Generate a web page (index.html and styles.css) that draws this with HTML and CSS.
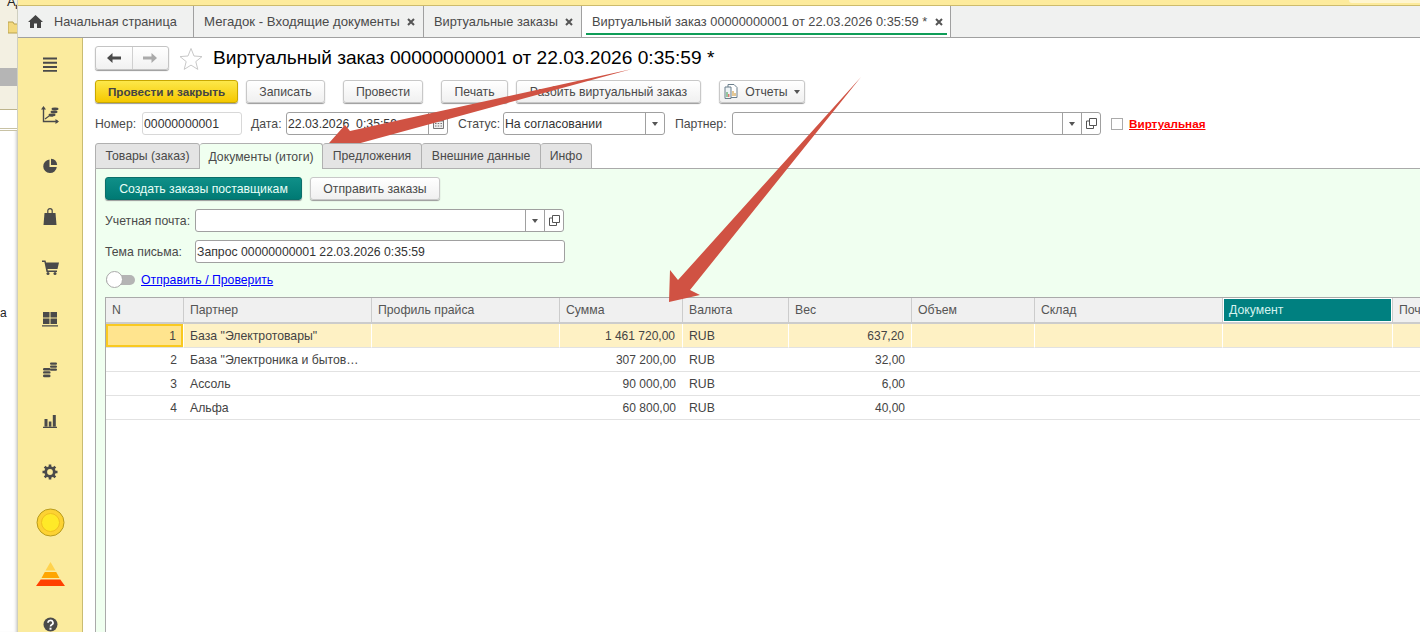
FILE: index.html
```html
<!DOCTYPE html>
<html lang="ru">
<head>
<meta charset="utf-8">
<title>Виртуальный заказ</title>
<link rel="stylesheet" href="styles.css">
</head>
<body>
<div class="app">
  <aside class="behind">
    <div class="behind-top"><span class="behind-text">Ад</span>
      <svg class="behind-folder" width="10" height="14" viewBox="0 0 10 14"><path d="M0 2h5l1 2h4v9H0z" fill="#f3d97e" stroke="#b9a24e"/></svg>
    </div>
    <div class="behind-gray"></div>
    <div class="behind-cream"></div>
    <div class="behind-white"></div>
    <div class="behind-lower"><span class="behind-letter">а</span></div>
  </aside>
  <div class="window">
    <div class="topbar"><span class="topbar-patch"></span></div>
    <nav class="opentabs">
      <div class="otab otab-home">
        <svg class="home-icon" width="15" height="13" viewBox="0 0 15 13"><path d="M7.5 0 15 7h-2v6H9V8.5H6V13H2V7H0z" fill="#444"/></svg>
        <span>Начальная страница</span>
      </div>
      <div class="otab otab-mega"><span>Мегадок - Входящие документы</span><svg class="x" width="8" height="8" viewBox="0 0 8 8"><path d="M1 1l6 6M7 1 1 7" stroke="#555" stroke-width="2"/></svg></div>
      <div class="otab otab-list"><span>Виртуальные заказы</span><svg class="x" width="8" height="8" viewBox="0 0 8 8"><path d="M1 1l6 6M7 1 1 7" stroke="#555" stroke-width="2"/></svg></div>
      <div class="otab otab-active"><span>Виртуальный заказ 00000000001 от 22.03.2026 0:35:59 *</span><svg class="x" width="8" height="8" viewBox="0 0 8 8"><path d="M1 1l6 6M7 1 1 7" stroke="#555" stroke-width="2"/></svg></div>
    </nav>
    <div class="workspace">
      <div class="sidebar">
        <div class="side-item"><svg width="16" height="16" viewBox="0 0 16 16"><path d="M1 1.5h14v2H1zM1 5.8h14v2H1zM1 10.1h14v2H1zM1 14h14v1.800H1z" fill="#4a4a4a"/></svg></div>
        <div class="side-item"><svg width="18" height="18" viewBox="0 0 18 18"><path d="M2.500 2v13.500H17" fill="none" stroke="#4a4a4a" stroke-width="1.400"/><path d="M2.500 0 5 3.500H0zM18 15.500 14.500 18v-5z" fill="#4a4a4a"/><path d="M4 13l4-3h4" fill="none" stroke="#4a4a4a" stroke-width="1.200"/><ellipse cx="14" cy="3" rx="3.500" ry="1.400" fill="#4a4a4a"/><ellipse cx="13" cy="6" rx="3.500" ry="1.400" fill="#4a4a4a"/><ellipse cx="11" cy="9" rx="3.500" ry="1.400" fill="#4a4a4a"/></svg></div>
        <div class="side-item"><svg width="16" height="16" viewBox="0 0 16 16"><path d="M7.500 1.500A6.800 6.800 0 1 0 14.800 9H7.500z" fill="#4a4a4a"/><path d="M9 .8A6.800 6.800 0 0 1 15.200 7H9z" fill="#4a4a4a"/></svg></div>
        <div class="side-item"><svg width="14" height="17" viewBox="0 0 14 17"><path d="M1.500 5h11L13.500 17H.5z" fill="#4a4a4a"/><path d="M4.800 7V2.800a2.200 2.200 0 0 1 4.400 0V7" fill="none" stroke="#4a4a4a" stroke-width="1.200"/></svg></div>
        <div class="side-item"><svg width="17" height="15" viewBox="0 0 17 15"><path d="M0 .5h3.500l.6 2H17l-1.500 6.500H5.500l.4 1.500H15v1.500H4.500L2.400 2H0z" fill="#4a4a4a"/><circle cx="6" cy="13.500" r="1.500" fill="#4a4a4a"/><circle cx="13" cy="13.500" r="1.500" fill="#4a4a4a"/></svg></div>
        <div class="side-item"><svg width="16" height="16" viewBox="0 0 16 16"><path d="M1 1h6.500v5.500H1zM8.500 1H15v5.500H8.500zM1 7.500h6.500V13H1zM8.500 7.500H15V13H8.500zM0 14.300h16v1.200H0z" fill="#4a4a4a"/></svg></div>
        <div class="side-item"><svg width="14" height="16" viewBox="0 0 14 16"><g fill="#4a4a4a"><rect x="7" y="0.500" width="7" height="2.300" rx="1.100"/><rect x="7" y="3.500" width="7" height="2.300" rx="1.100"/><rect x="7" y="6.500" width="7" height="2.300" rx="1.100"/><rect x="0" y="6" width="7.500" height="2.400" rx="1.200"/><rect x="0" y="9.200" width="7.500" height="2.400" rx="1.200"/><rect x="0" y="12.400" width="7.500" height="2.800" rx="1.300"/></g></svg></div>
        <div class="side-item"><svg width="14" height="14" viewBox="0 0 14 14"><path d="M1.500 5h3v7.500h-3zM5.800 7.500h2.600v5H5.800zM9.800 1h3v11.500h-3zM0 12.800h14V14H0z" fill="#4a4a4a"/></svg></div>
        <div class="side-item"><svg width="16" height="16" viewBox="0 0 16 16"><path d="M8 .5v15M.5 8h15M2.700 2.700l10.600 10.600M13.300 2.700 2.700 13.300" stroke="#4a4a4a" stroke-width="2.600"/><circle cx="8" cy="8" r="4.300" fill="none" stroke="#4a4a4a" stroke-width="2.800"/><circle cx="8" cy="8" r="2.900" fill="#fbeb9e"/></svg></div>
        <div class="side-item"><svg width="29" height="29" viewBox="0 0 29 29"><circle cx="14.500" cy="14.500" r="13.500" fill="#fdd233" stroke="#b89b1c"/><circle cx="14.500" cy="14.500" r="9" fill="#ffe928" stroke="#f0c020"/></svg></div>
        <div class="side-item"><svg width="29" height="24" viewBox="0 0 29 24"><path d="M14.500 0l5 8.500h-10z" fill="#ffd24d"/><path d="M8.800 10h11.400l3.300 6H5.500z" fill="#ffa500"/><path d="M4.700 17.500h19.600L29 24H0z" fill="#ff4000"/></svg></div>
        <div class="side-item"><svg width="15" height="15" viewBox="0 0 15 15"><circle cx="7.500" cy="7.500" r="7" fill="#4a4a4a"/><path d="M5 5.800a2.500 2.300 0 1 1 3.700 2c-.9.500-1.200 1-1.200 1.800" fill="none" stroke="#fff" stroke-width="1.700"/><path d="M6.500 10.700h2v2h-2z" fill="#fff"/></svg></div>
      </div>
      <main class="content">
        <div class="head">
          <div class="navline">
            <div class="navbtns">
              <span class="navbtn navbtn-left"><svg width="14" height="10" viewBox="0 0 14 10"><path d="M5.500 0v3.500H14v3H5.500V10L0 5z" fill="#4a4a4a"/></svg></span>
              <span class="navbtn"><svg width="14" height="10" viewBox="0 0 14 10"><path d="M8.500 0v3.500H0v3h8.500V10L14 5z" fill="#aaa"/></svg></span>
            </div>
            <svg class="star" width="24" height="23" viewBox="0 0 24 23"><path d="M12 1.500l3 7.500 8 .6-6.200 5 2 7.800-6.800-4.300-6.800 4.300 2-7.800L1 9.600 9 9z" fill="#fff" stroke="#c8c8c8"/></svg>
            <h1 class="title">Виртуальный заказ 00000000001 от 22.03.2026 0:35:59 *</h1>
          </div>
          <div class="toolbar">
            <button class="btn btn-primary">Провести и закрыть</button>
            <button class="btn btn-save">Записать</button>
            <button class="btn btn-post">Провести</button>
            <button class="btn btn-print">Печать</button>
            <button class="btn btn-split">Разбить виртуальный заказ</button>
            <button class="btn btn-reports">
              <svg width="15" height="15" viewBox="0 0 15 15"><path d="M4 .5h6l3 3v10H4z" fill="#fff" stroke="#6b7f8c"/><path d="M1 3h6v11.500H1z" fill="#eef3f5" stroke="#6b7f8c"/><path d="M2.500 8h1v5h-1z" fill="#3a9a4a"/><path d="M4.300 10h1v3h-1z" fill="#d9483a"/><path d="M8.500 7h1v5h-1zM10.500 9h1v3h-1z" fill="#c9902a"/></svg>
              <span>Отчеты</span><i class="caret"></i>
            </button>
          </div>
          <div class="fields">
            <label class="lbl lbl-num">Номер:</label>
            <div class="input input-num">00000000001</div>
            <label class="lbl lbl-date">Дата:</label>
            <div class="input input-date"><span class="val">22.03.2026  0:35:59</span>
              <span class="addon"><svg width="11" height="11" viewBox="0 0 11 11"><path d="M.5 1.500h10v9H.5z" fill="#eee" stroke="#777"/><path d="M.5 1h10v2.500H.5z" fill="#777"/><path d="M2 5h1.500v1H2zM4.700 5h1.500v1H4.700zM7.500 5H9v1H7.500zM2 7.500h1.500v1H2zM4.700 7.500h1.500v1H4.700zM7.500 7.500H9v1H7.500z" fill="#777"/></svg></span></div>
            <label class="lbl lbl-status">Статус:</label>
            <div class="input input-status"><span class="val">На согласовании</span><span class="addon"><i class="caret"></i></span></div>
            <label class="lbl lbl-partner">Партнер:</label>
            <div class="input input-partner"><span class="val"></span><span class="addon"><i class="caret"></i></span><span class="addon"><svg width="11" height="11" viewBox="0 0 11 11"><path d="M3.500.5h7v7h-7z" fill="none" stroke="#555"/><path d="M3.500 3H.5v7.500h7v-3" fill="none" stroke="#555"/></svg></span></div>
            <span class="check"></span>
            <a class="virtual-link">Виртуальная</a>
          </div>
          <div class="subtabs">
            <div class="subtab st-goods">Товары (заказ)</div>
            <div class="subtab st-docs subtab-active">Документы (итоги)</div>
            <div class="subtab st-offers">Предложения</div>
            <div class="subtab st-ext">Внешние данные</div>
            <div class="subtab st-info">Инфо</div>
          </div>
        </div>
        <section class="panel">
          <div class="panel-actions">
            <button class="btn btn-teal">Создать заказы поставщикам</button>
            <button class="btn btn-send">Отправить заказы</button>
          </div>
          <div class="panel-row panel-row-mail">
            <label class="lbl lbl-panel">Учетная почта:</label>
            <div class="input input-mail"><span class="val"></span><span class="addon"><i class="caret"></i></span><span class="addon"><svg width="11" height="11" viewBox="0 0 11 11"><path d="M3.500.5h7v7h-7z" fill="none" stroke="#555"/><path d="M3.500 3H.5v7.500h7v-3" fill="none" stroke="#555"/></svg></span></div>
          </div>
          <div class="panel-row panel-row-subject">
            <label class="lbl lbl-panel">Тема письма:</label>
            <div class="input input-subject">Запрос 00000000001 22.03.2026 0:35:59</div>
          </div>
          <div class="panel-row panel-row-toggle">
            <span class="toggle"><span class="knob"></span></span>
            <a class="send-link">Отправить / Проверить</a>
          </div>
          <div class="grid-wrap">
            <table class="grid">
              <colgroup>
                <col class="c-n"><col class="c-partner"><col class="c-profile"><col class="c-sum"><col class="c-cur"><col class="c-weight"><col class="c-vol"><col class="c-store"><col class="c-doc"><col class="c-mail">
              </colgroup>
              <thead>
                <tr><th>N</th><th>Партнер</th><th>Профиль прайса</th><th>Сумма</th><th>Валюта</th><th>Вес</th><th>Объем</th><th>Склад</th><th class="th-doc">Документ</th><th>Почта</th></tr>
              </thead>
              <tbody>
                <tr class="row-selected"><td class="num cell-current">1</td><td>База "Электротовары"</td><td></td><td class="num">1 461 720,00</td><td>RUB</td><td class="num">637,20</td><td></td><td></td><td></td><td></td></tr>
                <tr><td class="num">2</td><td>База "Электроника и бытов…</td><td></td><td class="num">307 200,00</td><td>RUB</td><td class="num">32,00</td><td></td><td></td><td></td><td></td></tr>
                <tr><td class="num">3</td><td>Ассоль</td><td></td><td class="num">90 000,00</td><td>RUB</td><td class="num">6,00</td><td></td><td></td><td></td><td></td></tr>
                <tr><td class="num">4</td><td>Альфа</td><td></td><td class="num">60 800,00</td><td>RUB</td><td class="num">40,00</td><td></td><td></td><td></td><td></td></tr>
              </tbody>
            </table>
          </div>
        </section>
      </main>
    </div>
  </div>
  <svg class="arrows" width="1420" height="632" viewBox="0 0 1420 632">
    <path d="M632 69 350 131 345 125 325.500 147 350 157 346 147z" fill="#d05243"/>
    <path d="M861 77 690 290 700 295 669 302 670 270 678 280z" fill="#d05243"/>
  </svg>
</div>
</body>
</html>
```
FILE: styles.css
```css
* { box-sizing: border-box; }
html, body { margin: 0; height: 100%; overflow: hidden; background: #fff; }
body { font-family: "Liberation Sans", Arial, sans-serif; font-size: 12.25px; color: #4a4a4a; }
.app { position: relative; display: flex; width: 1420px; height: 632px; overflow: hidden; }

/* window behind */
.behind { width: 17px; flex: none; display: flex; flex-direction: column; box-shadow: inset -3px 0 3px -2px #ccc; }
.behind-top { height: 68px; background: #f3f0e2; position: relative; overflow: hidden; }
.behind-text { position: absolute; left: 7px; top: -6px; font-size: 13px; color: #222; }
.behind-folder { position: absolute; left: 8px; top: 20px; }
.behind-gray { height: 18px; background: #b5b5b5; }
.behind-cream { height: 24px; background: #f3f0e2; border-bottom: 1px solid #bdb48c; }
.behind-white { height: 21px; background: #fff; border-bottom: 3px double #c8c2a4; }
.behind-lower { flex: 1; padding-top: 175px; }
.behind-letter { font-size: 12px; color: #222; }

.window { flex: 1; min-width: 0; display: flex; flex-direction: column; border-left: 1px solid #cfcfc0; }
.topbar { height: 6px; flex: none; background: #fdeb9c; border-bottom: 1px solid #cdbb6c; position: relative; }
.topbar-patch { position: absolute; right: 0; top: 0; width: 71px; height: 3px; background: #fff6d0; border-radius: 0 0 0 3px; }

/* open tabs */
.opentabs { height: 32px; flex: none; display: flex; background: #f0f1f0; border-bottom: 1px solid #a0a0a0; font-size: 13px; color: #4a4a4a; }
.otab { display: flex; align-items: center; height: 31px; border-right: 1px solid #a0a0a0; white-space: nowrap; }
.otab-home { width: 176px; padding-left: 10px; font-size: 12.7px; }
.home-icon { margin-right: 11px; }
.otab-mega { width: 230px; padding-left: 10px; justify-content: space-between; padding-right: 8px; font-size: 13.2px; }
.otab-list { width: 158px; padding-left: 10px; justify-content: space-between; padding-right: 8px; font-size: 12.8px; }
.otab-active { width: 369px; background: #fff; padding: 0 7px 0 10px; justify-content: space-between; position: relative; font-size: 12.8px; }
.otab-active::after { content: ""; position: absolute; left: 4px; right: 3px; bottom: 2px; height: 2px; background: #0f9d58; }

.workspace { flex: 1; min-height: 0; display: flex; }
.sidebar { width: 65px; flex: none; background: #fbeb9e; border-right: 1px solid #c9bc72; overflow: hidden; }
.side-item { height: 51px; display: flex; align-items: center; justify-content: center; }

.content { flex: 1; min-width: 0; display: flex; flex-direction: column; }
.head { padding: 8px 0 0 12px; }
.navline { display: flex; align-items: center; height: 24px; margin-bottom: 10px; }
.navbtns { display: flex; width: 74px; height: 24px; border: 1px solid #c4c4c4; border-radius: 3px; box-shadow: 0 1px 1px #999; background: linear-gradient(#fff, #f1f1f1); }
.navbtn { flex: 1; display: flex; align-items: center; justify-content: center; }
.navbtn-left { border-right: 1px solid #d0d0d0; }
.star { margin-left: 10px; }
.title { margin: 0 0 0 10px; font-size: 19.15px; font-weight: normal; color: #000; white-space: nowrap; line-height: 24px; }

.toolbar { display: flex; height: 24px; margin-bottom: 8px; }
.btn { height: 23px; padding: 0; font: 12.25px "Liberation Sans", Arial, sans-serif; color: #4a4a4a; border: 1px solid #c8c8c8; border-radius: 3px; background: linear-gradient(#fff, #f0f0f0); box-shadow: 0 1px 1px #999; display: flex; align-items: center; justify-content: center; white-space: nowrap; }
.btn-primary { width: 143px; font-size: 11.7px; font-weight: bold; color: #444; background: linear-gradient(#fde84a, #f5c800); border-color: #c9a800; }
.btn-save { width: 79px; margin-left: 8px; }
.btn-post { width: 80px; margin-left: 18px; }
.btn-print { width: 67px; margin-left: 18px; }
.btn-split { width: 185px; margin-left: 8px; }
.btn-reports { width: 86px; margin-left: 18px; gap: 6px; }
.caret { display: inline-block; width: 0; height: 0; border: 3px solid transparent; border-top: 4px solid #555; border-bottom: 0; }

.fields { display: flex; align-items: center; height: 23px; margin-bottom: 8px; }
.lbl { white-space: nowrap; color: #4a4a4a; }
.input { height: 23px; display: flex; align-items: center; border: 1px solid #a0a0a0; border-radius: 3px; background: #fff; color: #333; padding-left: 1px; white-space: pre; }
.val { flex: 1; min-width: 0; }
.addon { width: 19px; height: 100%; display: flex; align-items: center; justify-content: center; border-left: 1px solid #a0a0a0; flex: none; }
.lbl-num { width: 47px; }
.input-num { width: 100px; border-color: #d8d8d8; }
.lbl-date { width: 35px; margin-left: 9px; }
.input-date { width: 162px; }
.lbl-status { width: 45px; margin-left: 10px; }
.input-status { width: 162px; }
.lbl-partner { width: 57px; margin-left: 10px; }
.input-partner { width: 369px; }
.check { width: 12px; height: 12px; border: 1px solid #aaa; margin-left: 10px; background: #fff; }
.virtual-link { margin-left: 6px; font-size: 11.7px; font-weight: bold; color: #f00; text-decoration: underline; }

.subtabs { display: flex; height: 26px; position: relative; z-index: 1; margin-bottom: -1px; }
.subtab { height: 26px; display: flex; align-items: center; justify-content: center; background: #e4e4e4; border: 1px solid #b0b0b0; border-left: 0; border-radius: 3px 3px 0 0; white-space: nowrap; }
.st-goods { width: 105px; border-left: 1px solid #b0b0b0; }
.st-docs { width: 123px; }
.st-offers { width: 99px; }
.st-ext { width: 119px; }
.st-info { width: 51px; }
.subtab-active { background: #f0fff0; border-bottom: 0; }

.panel { flex: 1; min-height: 0; margin-left: 12px; padding: 8px 0 0 9px; background: #f0fff0; border-top: 1px solid #aaa; border-left: 1px solid #aaa; display: flex; flex-direction: column; }
.panel-actions { display: flex; height: 24px; gap: 8px; margin-bottom: 8px; }
.btn-teal { width: 197px; color: #e8fff8; background: linear-gradient(#0f8f88, #007a74); border-color: #0a6f69; }
.btn-send { width: 130px; }
.panel-row { display: flex; align-items: center; }
.panel-row-mail { height: 23px; margin-bottom: 8px; }
.panel-row-subject { height: 23px; margin-bottom: 8px; }
.panel-row-toggle { height: 18px; margin-bottom: 8px; }
.lbl-panel { width: 90px; }
.input-mail { width: 369px; }
.input-subject { width: 370px; }
.toggle { position: relative; width: 29px; height: 10px; margin-left: 1px; background: #b4b4b4; border-radius: 5px; }
.knob { position: absolute; left: 0; top: -4px; width: 17px; height: 17px; border-radius: 50%; background: #fff; border: 1px solid #aaa; }
.send-link { margin-left: 6px; color: #00f; text-decoration: underline; }

.grid-wrap { flex: 1; min-height: 0; background: #fff; border-top: 1px solid #aaa; border-left: 1px solid #aaa; overflow: hidden; }
.grid { table-layout: fixed; width: 1387px; border-collapse: separate; border-spacing: 0; font-size: 12.25px; color: #444; }
.c-n { width: 78px; } .c-partner { width: 188px; } .c-profile { width: 188px; } .c-sum { width: 123px; } .c-cur { width: 106px; }
.c-weight { width: 123px; } .c-vol { width: 123px; } .c-store { width: 188px; } .c-doc { width: 170px; } .c-mail { width: 100px; }
.grid th { height: 26px; padding: 0 6px; text-align: left; font-weight: normal; color: #555; background: #f0f0f0; border-right: 1px solid #ccc; border-bottom: 2px solid #ccc; white-space: nowrap; }
.grid th.th-doc { background: #008080; color: #d6f3ef; box-shadow: inset 0 0 0 1px #fff; }
.grid td { height: 24px; padding: 0 6px; border-bottom: 1px solid #e2e2e2; white-space: nowrap; overflow: hidden; }
.grid td.num { text-align: right; padding-right: 7px; font-size: 12px; }
.row-selected td { background: #fef1c4; border-right: 1px solid #fff; }
.row-selected td.cell-current { background: #ffe48e; box-shadow: inset 0 0 0 2px #f9c920; }

.arrows { position: absolute; left: 0; top: 0; pointer-events: none; }
```
